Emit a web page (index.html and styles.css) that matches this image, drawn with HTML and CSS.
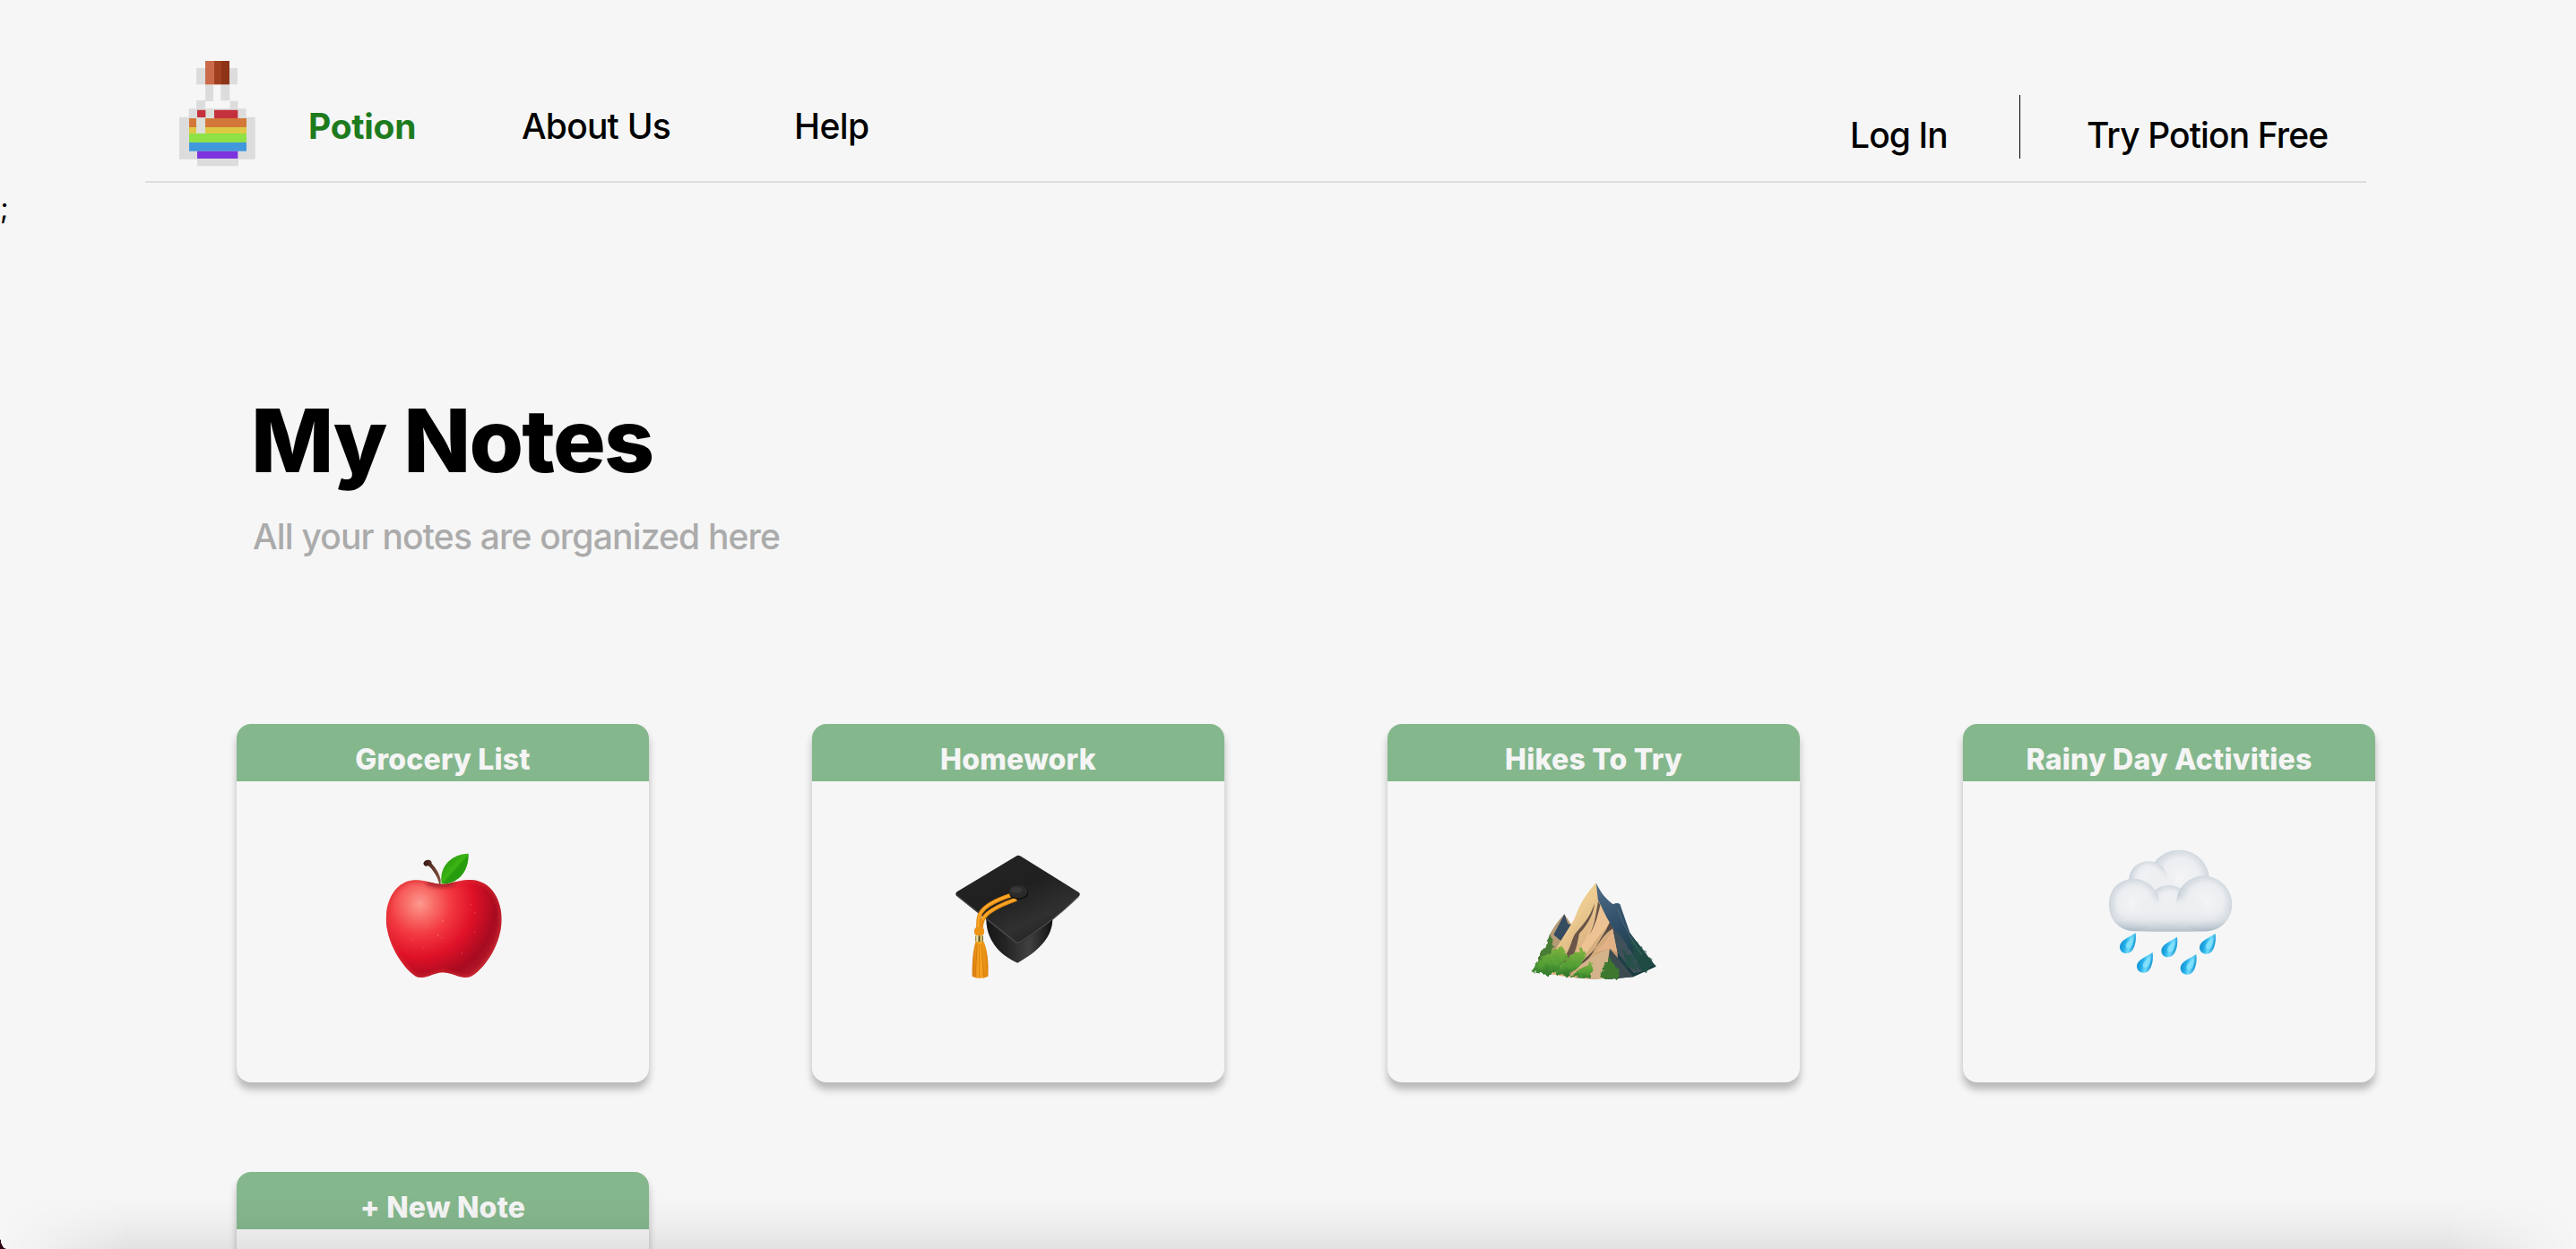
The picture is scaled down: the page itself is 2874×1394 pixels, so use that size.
FILE: index.html
```html
<!DOCTYPE html>
<html lang="en">
<head>
<meta charset="utf-8">
<title>Potion</title>
<link rel="stylesheet" href="styles.css">
</head>
<body>
<header class="header">
  <svg class="logo" viewBox="0 0 330 405" aria-label="Potion logo">
    <g fill="#dcdcdc">
      <path d="M87 48h30v55H87zM198 48h27v55h-27zM117 103h27v56h-27zM169 103h30v54h-30zM87 156h30v30H87zM200 158h26v28h-26z"/>
      <path d="M62 184h192v28h30v141h-56v23H90v-23H30V212h32z"/>
    </g>
    <path fill="#cb6a4a" d="M117 24h30v79h-30z"/><path fill="#a04020" d="M147 24h24v79h-24z"/><path fill="#8d3417" d="M171 24h27v79h-27z"/>
    <path fill="#c3313c" d="M90 188h28v25H90zM147 188h79v28h-79z"/>
    <path fill="#d37838" d="M63 216h192v30H63z"/><path fill="#dec945" d="M63 246h192v21H63z"/>
    <path fill="#8ee245" d="M63 267h192v30H63z"/><path fill="#4198dc" d="M63 297h192v29H63z"/><path fill="#7d34dd" d="M90 326h136v25H90z"/>
    <path fill="#dce0d8" d="M87 216h30v51H87zM120 184h26v32h-26z"/>
  </svg>
  <nav class="nav">
    <a class="brand">Potion</a>
    <a class="about">About Us</a>
    <a class="help">Help</a>
  </nav>
  <div class="account">
    <a class="login">Log In</a>
    <span class="divider"></span>
    <a class="signup">Try Potion Free</a>
  </div>
</header>
<div class="stray">;</div>
<main class="main">
  <h1 class="title">My Notes</h1>
  <p class="subtitle">All your notes are organized here</p>
  <section class="notes">
    <article class="card">
      <h2 class="card-title">Grocery List</h2>
      <svg class="art apple" viewBox="0 0 570 540">
        <defs>
          <radialGradient id="skin" gradientUnits="userSpaceOnUse" cx="205" cy="235" r="300"><stop offset="0" stop-color="#fc9a90"/><stop offset=".15" stop-color="#f8706a"/><stop offset=".35" stop-color="#f33940"/><stop offset=".6" stop-color="#df1128"/><stop offset=".85" stop-color="#a80b20"/><stop offset="1" stop-color="#b31a2c"/></radialGradient>
          <linearGradient id="leaf" x1="0" y1="0" x2="1" y2="1"><stop offset="0" stop-color="#188908"/><stop offset=".48" stop-color="#3cb514"/><stop offset=".55" stop-color="#259c0d"/><stop offset="1" stop-color="#2ba313"/></linearGradient>
          <linearGradient id="stem"><stop offset="0" stop-color="#351411"/><stop offset="1" stop-color="#85543e"/></linearGradient>
          <clipPath id="appleclip"><path d="M92 286C94 211 133 158 190 157C225 156 249 170 276 170C308 171 334 155 375 156C438 158 479 213 479 291C477 367 430 446 379 478C350 493 316 467 282 466C251 466 224 492 193 480C144 448 93 363 92 286z"/></clipPath>
          <filter id="soft"><feGaussianBlur stdDeviation="7"/></filter>
        </defs>
        <g clip-path="url(#appleclip)">
          <path fill="url(#skin)" d="M80 140h420v360H80z"/>
          <path d="M92 286C94 211 133 158 190 157C225 156 249 170 276 170C308 171 334 155 375 156C438 158 479 213 479 291C477 367 430 446 379 478C350 493 316 467 282 466C251 466 224 492 193 480C144 448 93 363 92 286z" fill="none" stroke="#d93236" stroke-width="13" opacity=".7" filter="url(#soft)"/>
          <ellipse cx="275" cy="166" rx="48" ry="17" fill="#8b1420" opacity=".6" filter="url(#soft)"/>
        </g>
        <g fill="#ff9189" opacity=".45"><circle cx="282" cy="294" r="3"/><circle cx="266" cy="341" r="3"/><circle cx="279" cy="350" r="2"/><circle cx="231" cy="317" r="2"/><circle cx="178" cy="355" r="2"/><circle cx="218" cy="382" r="2"/><circle cx="376" cy="239" r="2"/><circle cx="390" cy="266" r="2"/><circle cx="388" cy="331" r="2"/><circle cx="346" cy="402" r="2"/></g>
        <path fill="url(#stem)" d="M217 101Q220 88 237 89Q246 93 245 101Q269 127 275 155L275 171H270C268 151 249 122 234 109Q221 114 217 101z"/>
        <path fill="url(#leaf)" d="M278 169C269 120 303 70 368 68C370 121 341 170 278 169z"/>
      </svg>
    </article>
    <article class="card">
      <h2 class="card-title">Homework</h2>
      <svg class="art cap" viewBox="0 0 570 540">
        <defs>
          <linearGradient id="board" x1="0" y1="0" x2=".65" y2="1"><stop offset="0" stop-color="#252525"/><stop offset=".5" stop-color="#202020"/><stop offset=".8" stop-color="#303030"/><stop offset="1" stop-color="#222"/></linearGradient>
          <linearGradient id="bowl"><stop offset="0" stop-color="#151515"/><stop offset=".3" stop-color="#252525"/><stop offset=".65" stop-color="#414141"/><stop offset="1" stop-color="#111"/></linearGradient>
          <linearGradient id="tassel"><stop offset="0" stop-color="#d5780c"/><stop offset=".45" stop-color="#fba924"/><stop offset="1" stop-color="#dd810c"/></linearGradient>
          <linearGradient id="ring"><stop offset="0" stop-color="#8c7930"/><stop offset=".25" stop-color="#fff4b4"/><stop offset=".5" stop-color="#5e4d18"/><stop offset=".75" stop-color="#f5dc7b"/><stop offset="1" stop-color="#60501c"/></linearGradient>
        </defs>
        <path fill="url(#bowl)" d="M181 275L403 280C406 350 352 397 286 434C225 407 177 356 181 275z"/>
        <path fill="url(#board)" d="M280 77Q288 71 297 77L491 198Q498 203 491 211Q408 294 298 367Q287 374 276 366L81 209Q76 202 83 196z"/>
        <path fill="none" stroke="#555" stroke-width="4" opacity=".7" d="M491 211Q408 291 295 364Q287 369 279 364L84 209"/>
        <path fill="none" stroke="#e48c15" stroke-width="14" d="M262 208C211 225 165 249 157 279Q153 298 155 322M282 221C228 240 178 263 169 291Q163 306 163 322"/>
        <path fill="none" stroke="#ffab2a" stroke-width="6" d="M262 207C211 224 165 248 157 278Q153 298 155 322M282 220C228 239 178 262 169 290"/>
        <ellipse cx="290" cy="200" rx="32" ry="22" fill="#121212"/><ellipse cx="288" cy="195" rx="31" ry="22" fill="#2b2b2b"/><ellipse cx="282" cy="190" rx="20" ry="10" fill="#383838"/>
        <rect x="141" y="314" width="33" height="29" rx="12" fill="#ed9417"/>
        <path fill="url(#tassel)" d="M146 362H172C184 386 190 431 187 479Q160 492 134 479C133 431 137 386 146 362z"/>
        <path fill="none" stroke="#c9700a" stroke-width="2" d="M151 372L144 480M158 372V484M165 372L174 482"/>
        <rect x="144" y="343" width="27" height="20" rx="2" fill="url(#ring)"/>
      </svg>
    </article>
    <article class="card">
      <h2 class="card-title">Hikes To Try</h2>
      <svg class="art mountain" viewBox="0 0 540 450">
        <defs>
          <linearGradient id="rock" x1="0" y1="0" x2=".8" y2="1"><stop offset="0" stop-color="#f2dd83"/><stop offset=".4" stop-color="#edcb91"/><stop offset="1" stop-color="#c1936d"/></linearGradient>
          <linearGradient id="shade" x1="0" y1="0" x2=".4" y2="1"><stop offset="0" stop-color="#526d88"/><stop offset=".5" stop-color="#304f68"/><stop offset="1" stop-color="#17383d"/></linearGradient>
          <linearGradient id="grass" x1="0" y1="0" x2="0" y2="1"><stop offset="0" stop-color="#83b13f"/><stop offset=".6" stop-color="#55a035"/><stop offset="1" stop-color="#2d752b"/></linearGradient>
          <filter id="rough" x="-5%" y="-5%" width="110%" height="110%"><feTurbulence type="fractalNoise" baseFrequency=".06" numOctaves="3" seed="4"/><feDisplacementMap in="SourceGraphic" scale="22" xChannelSelector="R" yChannelSelector="G"/><feGaussianBlur stdDeviation="1.5"/></filter>
        </defs>
        <path fill="#b69a76" d="M119 245Q140 208 166 181L190 217L160 290L100 310z"/>
        <path fill="#344b60" d="M166 181L178 213L191 217L154 270L130 250Q145 222 166 181z"/>
        <path fill="url(#shade)" d="M272 76C292 119 314 137 329 148Q342 140 352 147L385 242L428 300L473 356L397 391L309 399L264 220z"/>
        <path fill="url(#rock)" d="M272 76C240 112 219 143 199 198L117 330L108 380L183 392L266 399L345 392L344 310L328 228L316 210L290 155L279 135z"/>
        <path fill="#edc394" d="M282 151L318 209L272 267L240 310L203 320Q249 254 282 151z"/>
        <path fill="#6a5648" d="M279 138C270 186 268 216 248 252Q272 219 286 150zM267 145C250 198 221 222 202 247C183 280 190 305 139 360L177 340C208 311 208 280 216 246C242 218 264 183 267 145z"/>
        <path fill="#554a44" d="M318 208L328 229C286 254 282 293 239 326L174 389L223 348C258 329 271 289 290 259Q306 237 318 208z"/>
        <path fill="#e2b286" d="M328 231L343 310L318 296L266 309Q306 278 328 231z"/>
        <path fill="#41515b" d="M328 229L344 309L398 379L424 374C391 330 373 257 328 229z"/>
        <path fill="#d4b38b" d="M318 296L304 396L245 397L209 359Q270 312 318 296z"/>
        <path fill="#3c4b50" d="M318 296L398 391L304 399z"/>
        <g filter="url(#rough)">
          <path fill="#497d35" d="M119 248L129 285L113 341L65 359L83 320z"/>
          <path fill="url(#grass)" d="M54 370L103 318L154 283L177 319L147 370L117 386z"/>
          <path fill="url(#grass)" d="M137 382L183 318L224 296L239 320L216 356L178 388z"/>
          <path fill="url(#grass)" d="M190 389L219 363L263 340L257 396z"/>
          <path fill="#3c782d" d="M287 396L299 350L316 326L350 371L349 396z"/>
          <path fill="#204f43" opacity=".8" d="M383 251L424 291L470 356L427 374L399 317zM359 294L393 327L417 375L374 354z"/>
        </g>
        <path fill="none" stroke="#83a09a" stroke-width="2" opacity=".5" d="M345 165Q374 247 426 318M384 301L427 373"/>
      </svg>
    </article>
    <article class="card">
      <h2 class="card-title">Rainy Day Activities</h2>
      <svg class="art rain" viewBox="0 0 570 510">
        <defs>
          <radialGradient id="puff" cx=".52" cy=".46" r=".54"><stop offset="0" stop-color="#f5f5f7"/><stop offset=".6" stop-color="#ebedf0"/><stop offset=".88" stop-color="#ced6dd"/><stop offset="1" stop-color="#b0bdc8"/></radialGradient>
          <linearGradient id="base" x1="0" y1="0" x2="0" y2="1"><stop offset="0" stop-color="#eff0f2" stop-opacity="0"/><stop offset=".5" stop-color="#dde2e7" stop-opacity=".7"/><stop offset="1" stop-color="#a3b2bf"/></linearGradient>
          <linearGradient id="water" x1="0" y1=".2" x2="1" y2=".5"><stop offset="0" stop-color="#0784c9"/><stop offset=".4" stop-color="#25aee8"/><stop offset=".65" stop-color="#70dafa"/><stop offset="1" stop-color="#0b91d2"/></linearGradient>
          <filter id="blend"><feGaussianBlur stdDeviation="9"/></filter>
          <clipPath id="cloudclip"><path d="M155 328C105 327 69 289 69 240C69 192 96 160 136 153C138 112 174 88 219 95C272 28 391 48 405 145C449 154 481 193 481 239C480 288 449 322 400 328Q285 331 155 328z"/></clipPath>
        </defs>
        <g clip-path="url(#cloudclip)">
          <circle cx="304" cy="157" r="102" fill="url(#puff)"/>
          <circle cx="200" cy="157" r="65" fill="url(#puff)"/>
          <ellipse cx="235" cy="170" rx="50" ry="40" fill="#edeff1" filter="url(#blend)"/>
          <circle cx="269" cy="245" r="71" fill="url(#puff)"/>
          <circle cx="151" cy="240" r="88" fill="url(#puff)"/>
          <circle cx="388" cy="236" r="94" fill="url(#puff)"/>
          <path d="M160 222H382V320H160z" fill="#edeff1" filter="url(#blend)"/>
          <path d="M69 250H482V332H69z" fill="url(#base)" opacity=".85"/>
        </g>
        <defs>
          <g id="drop">
            <path fill="url(#water)" d="M53 0C55 16 54 30 49 44C44 60 34 68 22 68C8 68 0 58 0 46C0 26 30 14 53 0z"/>
            <path fill="#8be6fd" opacity=".75" d="M47 11C46 28 44 43 34 50C26 55 18 48 21 39C24 29 38 22 47 11z"/>
          </g>
        </defs>
        <use href="#drop" x="105" y="334"/><use href="#drop" x="244" y="347"/><use href="#drop" x="372" y="336"/><use href="#drop" x="162" y="399"/><use href="#drop" x="308" y="405"/>
      </svg>
    </article>
    <article class="card">
      <h2 class="card-title">+ New Note</h2>
    </article>
  </section>
</main>
<div class="edge-shadow"></div>
<div class="corner"></div>
</body>
</html>
```

FILE: styles.css
```css
* { box-sizing: border-box; }
html { height: 100%; overflow: hidden; }
body { position: relative; margin: 0; height: 1394px; overflow: hidden; background: #f6f6f6; color: #000; font-family: Inter, "Liberation Sans", sans-serif; }
.header { display: flex; width: 2478px; height: 204px; margin-left: 162px; border-bottom: 2px solid #ddd; padding-left: 28px; }
.logo { width: 110px; height: 135px; margin-top: 60px; }
.nav { display: flex; margin: 117px 0 0 44px; font-size: 39px; line-height: 48px; font-weight: 500; white-space: nowrap; }
.brand { width: 238px; color: #1e7b1e; font-weight: 700; letter-spacing: -.3px; }
.about { width: 304px; letter-spacing: -.8px; }
.help { letter-spacing: -.6px; }
.account { display: flex; margin-left: auto; padding-top: 106px; font-size: 39px; line-height: 48px; font-weight: 500; white-space: nowrap; }
.account a { margin-top: 21px; letter-spacing: -.9px; }
.login { width: 189px; }
.divider { width: 1px; height: 71px; background: #000; }
.signup { width: 312px; margin-left: 74px; }
.stray { height: 60px; padding-top: 9px; font-size: 32px; line-height: 40px; }
.title { margin: 168px 0 0 280px; font-size: 98px; line-height: 120px; font-weight: 800; letter-spacing: -1.8px; white-space: nowrap; }
.subtitle { margin: 23px 0 0 282px; font-size: 39px; line-height: 48px; font-weight: 500; letter-spacing: -.83px; color: #ababab; white-space: nowrap; }
.notes { display: grid; grid-template-columns: repeat(4, 460px); column-gap: 182px; row-gap: 100px; height: 586px; margin: 185px 0 0 264px; overflow: visible; }
.card { height: 400px; border-radius: 16px; overflow: hidden; box-shadow: 0 8px 8px rgba(0, 0, 0, .25); }
.card:last-child { height: 86px; border-radius: 16px 16px 0 0; }
.card-title { height: 64px; margin: 0; padding-top: 20px; background: #85b78d; color: #f5f5f5; font-size: 32px; line-height: 40px; font-weight: 800; letter-spacing: .2px; text-align: center; white-space: nowrap; }
.art { display: block; }
.apple, .cap { width: 190px; height: 180px; margin-top: 58px; }
.apple { margin-left: 136px; }
.cap { margin-left: 134px; }
.mountain { width: 180px; height: 150px; margin: 88px 0 0 142px; }
.rain { width: 190px; height: 170px; margin: 58px 0 0 140px; }
.edge-shadow { position: absolute; left: 0; right: 0; bottom: 0; height: 60px; background: linear-gradient(to bottom, rgba(0,0,0,0), rgba(0,0,0,.028) 50%, rgba(0,0,0,.08)); mask-image: linear-gradient(to right, transparent, #000 145px, #000 calc(100% - 145px), transparent); }
.corner { position: absolute; left: 0; bottom: 0; width: 7px; height: 15px; background: radial-gradient(ellipse 7px 15px at 100% 0, transparent 96%, #2d0713 100%); }
```
